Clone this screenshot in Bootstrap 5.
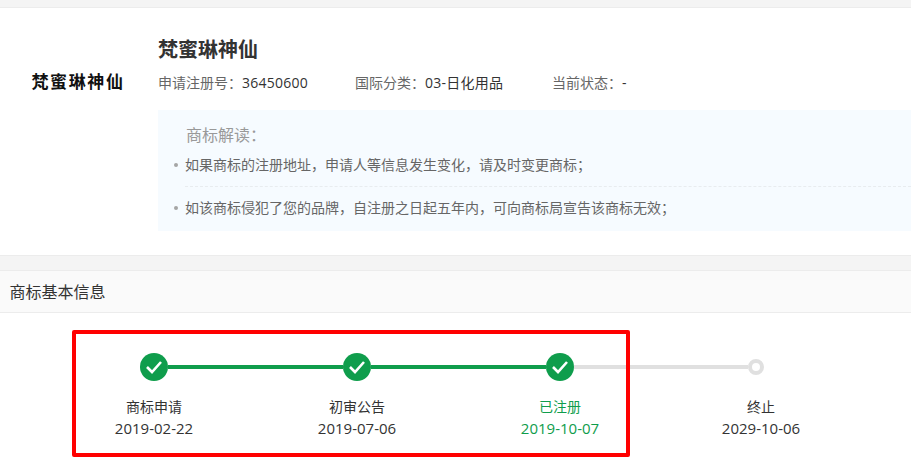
<!DOCTYPE html>
<html lang="zh-CN">
<head>
<meta charset="utf-8">
<title>商标详情</title>
<link rel="stylesheet" href="https://cdn.jsdelivr.net/npm/bootstrap@5.3.0/dist/css/bootstrap.min.css">
<style>
html,body{height:472px;overflow:hidden}
body{background:#f4f4f4;font-family:"Open Sans","Noto Sans CJK SC",sans-serif;font-size:14px;color:#333;line-height:20px}
.top-gap{height:7px}
.tm-panel{height:249px;background:#fff;border-top:1px solid #ececec;border-bottom:1px solid #ececec}
.tm-logo-col{width:158px;padding:63px 30px 0 31.5px;flex:none}
.tm-logo{font-size:17px;font-weight:700;letter-spacing:1.6px;color:#111;white-space:nowrap;line-height:22px}
.tm-main{padding-top:28px}
.tm-title{font-size:20px;font-weight:700;line-height:28px;color:#333;margin:0 0 7px}
.tm-meta{height:24px;line-height:24px;margin-bottom:15px}
.tm-meta-item{width:197px;color:#666;white-space:nowrap}
.tm-meta-item b{font-weight:400;color:#333;letter-spacing:.25px}
.tm-note{background:#f6fbff;height:121px;padding:14px 0 0 27px;color:#666}
.tm-note-head{color:#999;font-size:16px;line-height:22px;margin-bottom:9px;padding-left:1px}
.tm-note-item{position:relative;line-height:20px}
.tm-note-item::before{content:"";position:absolute;left:-11px;top:8px;width:4px;height:4px;border-radius:50%;background:#a5a5a5}
.tm-note-first{padding-bottom:11px;border-bottom:1px dashed #e8ecef;margin-bottom:11px}
.tm-gap{height:14px}
.tm-head{height:43px;background:#fafafa;border-top:1px solid #ececec;border-bottom:1px solid #ececec;padding-left:9.5px;font-size:16px;line-height:42px;color:#333}
.tm-body{background:#fff;height:159px;position:relative;padding:40px 0 0 140px}
.tm-track{height:28px}
.tm-dot{width:28px;height:28px;border-radius:50%;background:#0f9d4c;flex:none}
.tm-line{width:175px;height:4px;background:#0f9d4c;flex:none}
.tm-line-off{background:#e0e0e0;width:174px}
.tm-ring{width:16px;height:16px;border-radius:50%;border:4px solid #e0e0e0;background:#fff;flex:none}
.tm-labels{margin:15px 0 0 -87.5px}
.tm-step{width:203px;text-align:center;line-height:22px;color:#333;flex:none}
.tm-date{display:block;font-size:15px;line-height:20px}
.tm-step-last{width:199px}
.tm-step-on{color:#0f9d4c}
.tm-mark{position:absolute;left:72px;top:17px;width:558px;height:127px;border:4px solid #f00;border-radius:2px;pointer-events:none}
</style>
</head>
<body>
<div class="top-gap"></div>
<section class="tm-panel d-flex">
  <div class="tm-logo-col"><div class="tm-logo">梵蜜琳神仙</div></div>
  <div class="tm-main flex-grow-1">
    <h1 class="tm-title">梵蜜琳神仙</h1>
    <div class="tm-meta d-flex">
      <div class="tm-meta-item">申请注册号&#xFF1A;<b>36450600</b></div>
      <div class="tm-meta-item">国际分类&#xFF1A;<b>03-日化用品</b></div>
      <div class="tm-meta-item">当前状态&#xFF1A;<b>-</b></div>
    </div>
    <div class="tm-note">
      <div class="tm-note-head">商标解读&#xFF1A;</div>
      <div class="tm-note-item tm-note-first">如果商标的注册地址&#xFF0C;申请人等信息发生变化&#xFF0C;请及时变更商标&#xFF1B;</div>
      <div class="tm-note-item">如该商标侵犯了您的品牌&#xFF0C;自注册之日起五年内&#xFF0C;可向商标局宣告该商标无效&#xFF1B;</div>
    </div>
  </div>
</section>
<div class="tm-gap"></div>
<div class="tm-head">商标基本信息</div>
<section class="tm-body">
  <div class="tm-track d-flex align-items-center">
    <span class="tm-dot d-flex align-items-center justify-content-center"><svg width="18" height="14" viewBox="0 0 18 14" fill="none"><path d="M2 7l5 5 9-10" stroke="#fff" stroke-width="2.6"/></svg></span>
    <span class="tm-line"></span>
    <span class="tm-dot d-flex align-items-center justify-content-center"><svg width="18" height="14" viewBox="0 0 18 14" fill="none"><path d="M2 7l5 5 9-10" stroke="#fff" stroke-width="2.6"/></svg></span>
    <span class="tm-line"></span>
    <span class="tm-dot d-flex align-items-center justify-content-center"><svg width="18" height="14" viewBox="0 0 18 14" fill="none"><path d="M2 7l5 5 9-10" stroke="#fff" stroke-width="2.6"/></svg></span>
    <span class="tm-line tm-line-off"></span>
    <span class="tm-ring"></span>
  </div>
  <div class="tm-labels d-flex">
    <div class="tm-step">商标申请<span class="tm-date">2019-02-22</span></div>
    <div class="tm-step">初审公告<span class="tm-date">2019-07-06</span></div>
    <div class="tm-step tm-step-on">已注册<span class="tm-date">2019-10-07</span></div>
    <div class="tm-step tm-step-last">终止<span class="tm-date">2029-10-06</span></div>
  </div>
  <div class="tm-mark"></div>
</section>
<script src="https://cdn.jsdelivr.net/npm/bootstrap@5.3.0/dist/js/bootstrap.bundle.min.js"></script>
</body>
</html>
